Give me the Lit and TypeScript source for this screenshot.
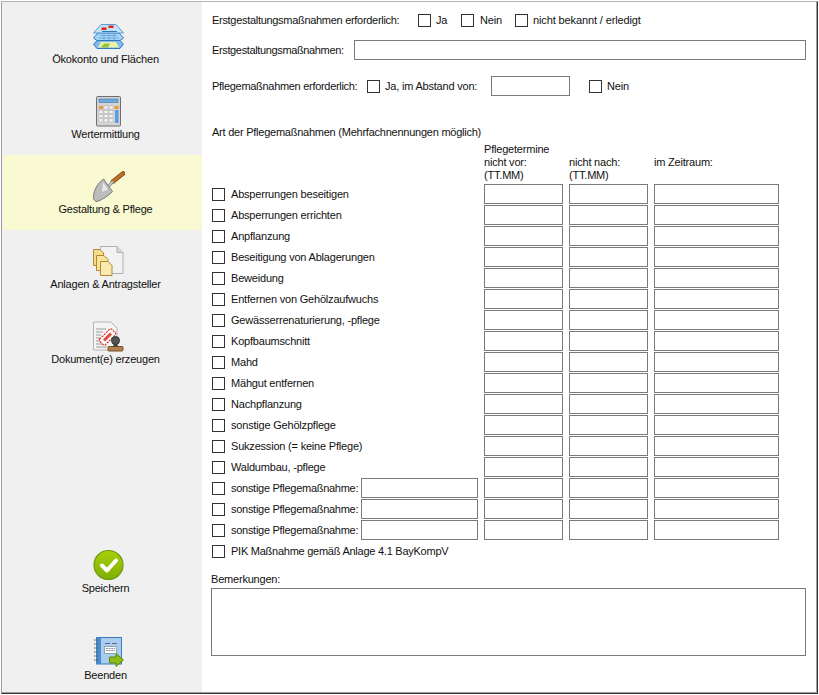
import { LitElement, html, css, svg } from "lit";
import { customElement } from "lit/decorators.js";

const icons: Record<string, unknown> = {
  layers: svg`
    <path d="M1.500 25 L6 21 H27 L31.500 25 L28 29.500 H5 Z" fill="#7fbcec" stroke="#2f78bc"/>
    <path d="M6 28.500 L9 23 H24 L27 28.500 Z" fill="#f0f0a8"/>
    <path d="M9 28.500 L12 24.500 H18 L16 28.500 Z" fill="#8cc63f"/>
    <path d="M1.500 19 L6 14 H27 L31.500 19 L28 21.500 H5 Z" fill="#a8d6f5" stroke="#2f78bc"/>
    <path d="M8 16.500 H25 M6 19 H27 M12 15 V21 M17 15 V21 M22 15 V21" stroke="#5c9ad2" stroke-width=".7" fill="none"/>
    <path d="M1.500 14 L9 5.500 H24 L31.500 14 Z" fill="#c3e2f7" stroke="#5a9bd8"/>
    <rect x="9.500" y="8.500" width="5" height="2.500" fill="#e0201a"/>
    <rect x="16.500" y="6.500" width="5" height="2.500" fill="#e0201a"/>
    <path d="M10 12.500 H25" stroke="#2f78bc"/>`,
  calculator: svg`
    <rect x="4.500" y="2.500" width="24" height="29.500" rx="1" fill="#d4d4d4" stroke="#6e6e6e"/>
    <rect x="7" y="5" width="19" height="3.500" fill="#6fa9e0" stroke="#4478b0" stroke-width=".6"/>
    <rect x="23" y="16" width="3.500" height="13" fill="#5a9be0"/>
    ${[0, 1, 2, 3].map((r) =>
      [0, 1, 2].map(
        (c) =>
          svg`<rect x=${7 + c * 5} y=${12 + r * 4.3} width="4" height="3" fill="#f4f4f4" stroke="#a4a4a4" stroke-width=".4"/>`
      )
    )}
    <rect x="7" y="12" width="4" height="3" fill="#ee9a3c"/>
    <rect x="22.500" y="12" width="4" height="3" fill="#ee9a3c"/>`,
  shovel: svg`
    <path d="M31 4.500 L21 12.500" stroke="#7c4414" stroke-width="4.500" stroke-linecap="round"/>
    <path d="M31 4.500 L21 12.500" stroke="#bd7228" stroke-width="3" stroke-linecap="round"/>
    <path d="M21 12.500 L14 20" stroke="#8a8a8a" stroke-width="3"/>
    <path d="M21 12.500 L14 20" stroke="#c8c8c8" stroke-width="1.500"/>
    <path d="M11.500 10 L20.500 22.500 C16 27 10 31 5 32.500 C2.500 32.500 1.500 30.500 1.500 28 C1.500 21 6 14 11.500 10 Z" fill="#bcbcbc" stroke="#7d7d7d"/>
    <path d="M11 13.500 L16 20.500 L10 23 Z" fill="#e8e8e8"/>`,
  files: svg`
    <path d="M8.500 2.500 H25 L31 8.500 V29.500 H8.500 Z" fill="#f2f2f2" stroke="#b0b0b0"/>
    <path d="M25 2.500 V8.500 H31" fill="#d8d8d8" stroke="#b0b0b0"/>
    <path d="M1.500 5.500 H8 L11.500 9 V21.500 H1.500 Z" fill="#f6dc8c" stroke="#b08a30"/>
    <path d="M4.500 11.500 H12 L16 15.500 V26.500 H4.500 Z" fill="#f8e29c" stroke="#b08a30"/>
    <path d="M8.500 17.500 H16 L20 21.500 V31.500 H8.500 Z" fill="#fbeab0" stroke="#b08a30"/>`,
  stamp: svg`
    <path d="M1.500 3 H19 L25 9 V31 H1.500 Z" fill="#f4f4f4" stroke="#b4b4b4"/>
    <path d="M4 10 H14 M4 13 H11 M4 16 H9 M4 19 H8 M4 22 H9 M4 25 H12 M4 28 H15" stroke="#9a9a9a"/>
    <g transform="rotate(-45 15.500 18)">
      <rect x="7" y="14" width="17" height="8" rx="1.500" fill="#fff" stroke="#dd2a22" stroke-width="1.200" stroke-dasharray="2 1"/>
      <rect x="10.500" y="16.500" width="10" height="3" fill="#dd4a40"/>
    </g>
    <rect x="16" y="27.500" width="15" height="4.500" rx="1" fill="#b5814a" stroke="#74502a"/>
    <path d="M21 27.500 L22 24 H25 L26 27.500 Z" fill="#444"/>
    <circle cx="23.500" cy="21.500" r="4" fill="#555" stroke="#333"/>`,
  save: svg`
    <defs>
      <linearGradient id="g" x1="0" y1="0" x2="0" y2="1">
        <stop offset="0" stop-color="#a8d00c"/>
        <stop offset="1" stop-color="#7fae04"/>
      </linearGradient>
    </defs>
    <circle cx="16.500" cy="16" r="14.500" fill="url(#g)" stroke="#6f9a10" stroke-width="1.200"/>
    <path d="M10 16.500 L15 21.500 L24 11.500" fill="none" stroke="#fff" stroke-width="4" stroke-linejoin="round" stroke-linecap="round"/>`,
  exit: svg`
    <rect x="4.500" y="2.500" width="25" height="26.500" fill="#a9cdf0" stroke="#3a7ab8"/>
    <rect x="4.500" y="2.500" width="4.500" height="26.500" fill="#4a8ccc"/>
    <path d="M2 5 H6 M2 9 H6 M2 13 H6 M2 17 H6 M2 21 H6 M2 25 H6" stroke="#555" stroke-dasharray="1 .5"/>
    <path d="M13 8.500 H18 M20 8.500 H25" stroke="#667"/>
    <rect x="12.500" y="11.500" width="12" height="7" fill="#fff" stroke="#8aa"/>
    <path d="M14 13.500 H23 M14 15.500 H23" stroke="#778" stroke-dasharray="2 .6" stroke-width=".8"/>
    <path d="M17.500 22 H24 V18.500 L31.500 25 L24 31.500 V28 H17.500 Z" fill="#8cbc14" stroke="#5d8a10"/>`,
};

const measures = [
  "Absperrungen beseitigen",
  "Absperrungen errichten",
  "Anpflanzung",
  "Beseitigung von Ablagerungen",
  "Beweidung",
  "Entfernen von Gehölzaufwuchs",
  "Gewässerrenaturierung, -pflege",
  "Kopfbaumschnitt",
  "Mahd",
  "Mähgut entfernen",
  "Nachpflanzung",
  "sonstige Gehölzpflege",
  "Sukzession (= keine Pflege)",
  "Waldumbau, -pflege",
];

@customElement("app-root")
export class AppRoot extends LitElement {
  static styles = css`
    :host {
      display: block;
      width: 819px;
      height: 695px;
      padding: 1px;
      box-sizing: border-box;
      background: #fff;
      font-family: "Liberation Sans", Arial, sans-serif;
      font-size: 11px;
      letter-spacing: -0.2px;
      color: #111;
      white-space: nowrap;
    }

    * {
      box-sizing: border-box;
    }

    .window {
      display: flex;
      width: 100%;
      height: 100%;
      background: #fff;
      border-style: solid;
      border-width: 1px;
      border-color: #b4b4b4 #333 #333 #a0a0a0;
      box-shadow: inset -1px -1px 0 #a0a0a0;
    }

    .sidebar {
      display: flex;
      flex-direction: column;
      width: 200px;
      margin-bottom: 1px;
      padding: 3px 0 0 1px;
      background: #f0f0f0;
    }

    .nav-item {
      display: flex;
      flex-direction: column;
      align-items: center;
      height: 75px;
      padding: 14px 0 0 6px;
    }

    .nav-item.active {
      background: #f9f9d2;
    }

    .nav-item svg {
      width: 33px;
      height: 33px;
      margin-left: 5px;
    }

    .nav-item span {
      line-height: 14px;
    }

    .nav-bottom {
      display: flex;
      flex-direction: column;
      gap: 36px;
      margin-top: auto;
      padding-bottom: 7px;
    }

    .nav-bottom .nav-item {
      height: 50px;
      padding-top: 0;
    }

    .nav-bottom .nav-item:first-child span {
      margin-top: -1px;
    }

    .main {
      flex: 1;
      padding: 8px 0 0 9px;
    }

    .row {
      display: flex;
      align-items: center;
      height: 20px;
    }

    .row + .row {
      margin-top: 10px;
    }

    .row.care {
      margin-top: 16px;
    }

    input[type="text"],
    textarea {
      display: block;
      height: 20px;
      margin: 0;
      padding: 0;
      border: 1px solid #7a7a7a;
      border-radius: 0;
      background: #fff;
      outline: none;
      resize: none;
    }

    input[type="checkbox"] {
      appearance: none;
      flex: none;
      width: 13px;
      height: 13px;
      margin: 0;
      border: 1px solid #333;
      border-radius: 0;
      background: #fff;
    }

    .check {
      display: flex;
      align-items: center;
      gap: 5px;
    }

    .first-label {
      width: 207px;
      padding-left: 1px;
      letter-spacing: -0.3px;
    }

    .check.ja {
      width: 43px;
    }

    .check.nein {
      width: 54px;
      gap: 6px;
    }

    .check.unknown {
      letter-spacing: -0.12px;
    }

    .wide-label {
      width: 143px;
      padding-left: 1px;
      letter-spacing: -0.36px;
    }

    .wide {
      width: 452px;
    }

    .care-label {
      width: 156px;
      padding-left: 1px;
      letter-spacing: -0.3px;
    }

    .care .check {
      width: 124px;
    }

    .care input[type="text"] {
      width: 79px;
      margin-right: 19px;
    }

    .section {
      margin: 27px 0 0 1px;
      line-height: 18px;
      letter-spacing: -0.24px;
    }

    .grid {
      display: grid;
      grid-template-columns: 266px 79px 79px 125px;
      column-gap: 6px;
      row-gap: 1px;
      margin: 2px 0 0 1px;
    }

    .grid input[type="text"] {
      width: 100%;
    }

    .head-cell {
      align-self: end;
      line-height: 13px;
      margin-bottom: 1px;
    }

    .name {
      display: flex;
      align-items: center;
      gap: 6px;
      height: 20px;
    }

    .name.other {
      letter-spacing: -0.28px;
    }

    .grid .name input[type="text"] {
      flex: none;
      width: 117px;
      margin-left: -3px;
    }

    .pik {
      height: 14px;
      margin: 4px 0 0 1px;
      letter-spacing: -0.25px;
    }

    .notes-label {
      margin-top: 14px;
      line-height: 14px;
    }

    textarea {
      width: 595px;
      height: 68px;
      margin-top: 2px;
    }
  `;

  private nav(icon: string, label: string, active = false) {
    return html`
      <div class="nav-item ${active ? "active" : ""}">
        <svg viewBox="0 0 33 33">${icons[icon]}</svg>
        <span>${label}</span>
      </div>
    `;
  }

  private dates() {
    return html`
      <input type="text" />
      <input type="text" />
      <input type="text" />
    `;
  }

  render() {
    return html`
      <div class="window">
        <aside class="sidebar">
          ${this.nav("layers", "Ökokonto und Flächen")}
          ${this.nav("calculator", "Wertermittlung")}
          ${this.nav("shovel", "Gestaltung & Pflege", true)}
          ${this.nav("files", "Anlagen & Antragsteller")}
          ${this.nav("stamp", "Dokument(e) erzeugen")}
          <div class="nav-bottom">
            ${this.nav("save", "Speichern")}
            ${this.nav("exit", "Beenden")}
          </div>
        </aside>
        <main class="main">
          <div class="row">
            <span class="first-label">Erstgestaltungsmaßnahmen erforderlich:</span>
            <label class="check ja"><input type="checkbox" />Ja</label>
            <label class="check nein"><input type="checkbox" />Nein</label>
            <label class="check unknown"><input type="checkbox" />nicht bekannt / erledigt</label>
          </div>
          <div class="row">
            <span class="wide-label">Erstgestaltungsmaßnahmen:</span>
            <input class="wide" type="text" />
          </div>
          <div class="row care">
            <span class="care-label">Pflegemaßnahmen erforderlich:</span>
            <label class="check"><input type="checkbox" />Ja, im Abstand von:</label>
            <input type="text" />
            <label class="check"><input type="checkbox" />Nein</label>
          </div>
          <div class="section">Art der Pflegemaßnahmen (Mehrfachnennungen möglich)</div>
          <div class="grid">
            <div></div>
            <div class="head-cell">Pflegetermine<br />nicht vor:<br />(TT.MM)</div>
            <div class="head-cell">nicht nach:<br />(TT.MM)</div>
            <div class="head-cell">im Zeitraum:<br />&nbsp;</div>
            ${measures.map(
              (m) => html`
                <label class="name"><input type="checkbox" />${m}</label>
                ${this.dates()}
              `
            )}
            ${[0, 1, 2].map(
              () => html`
                <div class="name other">
                  <input type="checkbox" />
                  <span>sonstige Pflegemaßnahme:</span>
                  <input type="text" />
                </div>
                ${this.dates()}
              `
            )}
          </div>
          <label class="name pik"><input type="checkbox" />PIK Maßnahme gemäß Anlage 4.1 BayKompV</label>
          <div class="notes-label">Bemerkungen:</div>
          <textarea></textarea>
        </main>
      </div>
    `;
  }
}
